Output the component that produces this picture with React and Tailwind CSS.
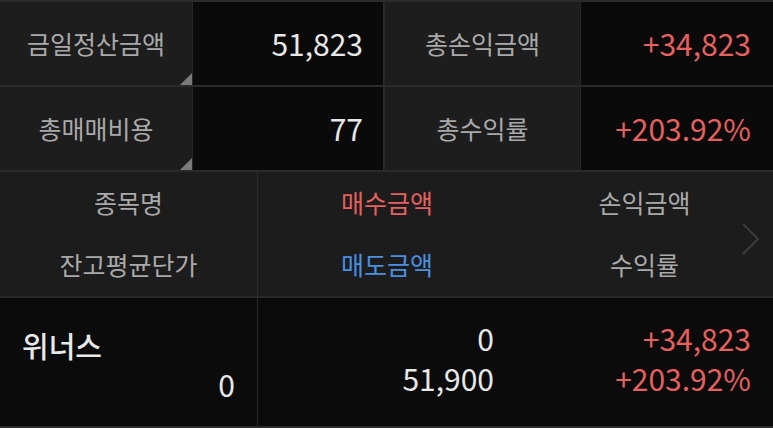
import React from "react";

const font = { fontFamily: '"Noto Sans CJK KR", "Noto Sans", sans-serif' };

function Label({ children }) {
  return (
    <div className="relative flex w-[192px] items-center justify-center bg-[#1d1d1d] text-[25px] text-[#a9a9a9]">
      <span>{children}</span>
      <div className="absolute bottom-0 right-0 h-0 w-0 border-b-[12px] border-l-[12px] border-b-[#7a7a7a] border-l-transparent" />
    </div>
  );
}

function Label2({ children }) {
  return (
    <div className="flex w-[195px] items-center justify-center bg-[#1d1d1d] text-[25px] text-[#a9a9a9]">
      {children}
    </div>
  );
}

function Value({ children, red, w }) {
  return (
    <div
      className={`flex items-center justify-end bg-[#0a0a0a] pr-[20px] text-[30px] ${red ? "text-[#e5605f]" : "text-[#e8e8e8]"} ${w}`}
    >
      {children}
    </div>
  );
}

export default function App() {
  return (
    <div className="h-[428px] w-[773px] overflow-hidden bg-[#2a2a2a]" style={font}>
      <div className="flex flex-col gap-[2px] pt-[2px]">
        <div className="flex h-[83px]">
          <Label>금일정산금액</Label>
          <div className="w-px bg-[#262626]" />
          <Value w="w-[190px]">51,823</Value>
          <div className="w-[2px] bg-[#2a2a2a]" />
          <Label2>총손익금액</Label2>
          <div className="w-px bg-[#262626]" />
          <Value red w="flex-1 pr-[22px]">+34,823</Value>
        </div>
        <div className="flex h-[83px]">
          <Label>총매매비용</Label>
          <div className="w-px bg-[#262626]" />
          <Value w="w-[190px]">77</Value>
          <div className="w-[2px] bg-[#2a2a2a]" />
          <Label2>총수익률</Label2>
          <div className="w-px bg-[#262626]" />
          <Value red w="flex-1 pr-[22px]">+203.92%</Value>
        </div>
        <div className="relative flex h-[124px] bg-[#1c1c1c] text-[25px]">
          <div className="flex w-[257px] flex-col">
            <div className="flex h-[62px] items-center justify-center text-[#a9a9a9]">종목명</div>
            <div className="flex h-[62px] items-center justify-center text-[#a9a9a9]">잔고평균단가</div>
          </div>
          <div className="w-px bg-[#2a2a2a]" />
          <div className="flex w-[258px] flex-col">
            <div className="flex h-[62px] items-center justify-center text-[#e5605f]">매수금액</div>
            <div className="flex h-[62px] items-center justify-center text-[#4a8fe0]">매도금액</div>
          </div>
          <div className="flex flex-1 flex-col">
            <div className="flex h-[62px] items-center justify-center text-[#a9a9a9]">손익금액</div>
            <div className="flex h-[62px] items-center justify-center text-[#a9a9a9]">수익률</div>
          </div>
          <svg className="absolute left-[740px] top-[50px]" width="20" height="34" viewBox="0 0 20 34">
            <polyline points="3,2 18,17 3,32" fill="none" stroke="#3c3c3c" strokeWidth="2" />
          </svg>
        </div>
        <div className="flex h-[128px] bg-[#0b0b0b]">
          <div className="flex w-[257px] flex-col px-[22px] pt-[27px]">
            <div className="text-[29px] font-medium leading-[40px] text-[#e8e8e8]">위너스</div>
            <div className="text-right text-[30px] leading-[38px] text-[#e8e8e8]">0</div>
          </div>
          <div className="w-px bg-[#2a2a2a]" />
          <div className="flex w-[258px] flex-col pr-[22px] pt-[20px] text-right text-[30px] leading-[40px] text-[#e8e8e8]">
            <div>0</div>
            <div>51,900</div>
          </div>
          <div className="flex flex-1 flex-col pr-[22px] pt-[20px] text-right text-[30px] leading-[40px] text-[#e5605f]">
            <div>+34,823</div>
            <div>+203.92%</div>
          </div>
        </div>
      </div>
    </div>
  );
}
